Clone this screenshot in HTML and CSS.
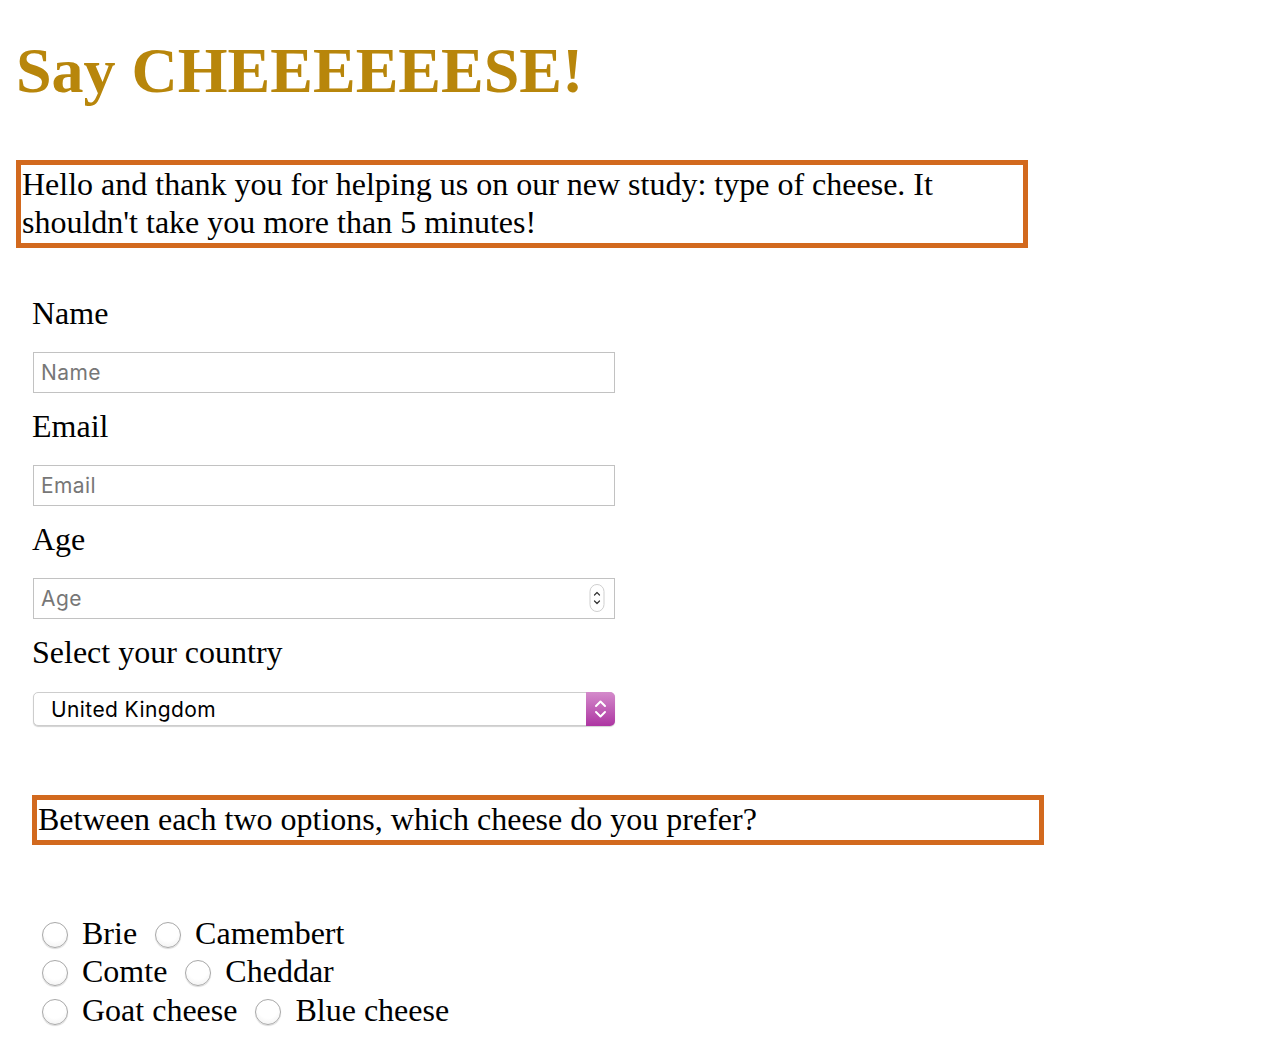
FILE: index.html
```html
<!DOCTYPE html>
<html lang="en">
<head>
<meta charset="utf-8">
<title>Say CHEEEEEESE!</title>
<link rel="stylesheet" href="styles.css">
</head>
<body>
<h1 class="title">Say CHEEEEEESE!</h1>
<p class="intro">Hello and thank you for helping us on our new study: type of cheese. It shouldn't take you more than 5 minutes!</p>
<form class="survey">
  <label class="field-label" for="name">Name</label>
  <input class="field" id="name" type="text" placeholder="Name">
  <label class="field-label" for="email">Email</label>
  <input class="field" id="email" type="text" placeholder="Email">
  <label class="field-label" for="age">Age</label>
  <div class="number-wrap">
    <input class="field" id="age" type="text" placeholder="Age">
    <svg class="spinner" width="16" height="28" viewBox="0 0 16 28" aria-hidden="true">
      <rect x="1" y="0.5" width="14" height="27" rx="7" fill="#fff" stroke="#cfcfcf"/>
      <path d="M5.5 11 L8 8.5 L10.5 11" fill="none" stroke="#333" stroke-width="1.2" stroke-linecap="round" stroke-linejoin="round"/>
      <path d="M5.5 17 L8 19.5 L10.5 17" fill="none" stroke="#333" stroke-width="1.2" stroke-linecap="round" stroke-linejoin="round"/>
    </svg>
  </div>
  <label class="field-label" for="country">Select your country</label>
  <div class="select-wrap">
    <select class="select" id="country">
      <option>United Kingdom</option>
      <option>France</option>
      <option>United States</option>
    </select>
    <span class="select-arrow" aria-hidden="true">
      <svg width="29" height="34" viewBox="0 0 29 34">
        <path d="M10 14 L14.5 9.5 L19 14" fill="none" stroke="#fff" stroke-width="2" stroke-linecap="round" stroke-linejoin="round"/>
        <path d="M10 20 L14.5 24.5 L19 20" fill="none" stroke="#fff" stroke-width="2" stroke-linecap="round" stroke-linejoin="round"/>
      </svg>
    </span>
  </div>
  <p class="question">Between each two options, which cheese do you prefer?</p>
  <div class="choices">
    <div class="row"><input class="radio" type="radio" name="q1" id="brie"> <label for="brie">Brie</label> <input class="radio" type="radio" name="q1" id="camembert"> <label for="camembert">Camembert</label></div>
    <div class="row"><input class="radio" type="radio" name="q2" id="comte"> <label for="comte">Comte</label> <input class="radio" type="radio" name="q2" id="cheddar"> <label for="cheddar">Cheddar</label></div>
    <div class="row"><input class="radio" type="radio" name="q3" id="goat"> <label for="goat">Goat cheese</label> <input class="radio" type="radio" name="q3" id="blue"> <label for="blue">Blue cheese</label></div>
  </div>
</form>
</body>
</html>
```
FILE: styles.css
```css
html, body {
  background: #fff;
}
body {
  margin: 0;
  padding: 8px;
  font-family: "Liberation Serif", "Times New Roman", serif;
  color: #000;
}
.title {
  margin: 26px 0 52px 8px;
  font-size: 64px;
  line-height: 74px;
  font-weight: bold;
  color: #b8860b;
}
.intro {
  box-sizing: border-box;
  width: 1012px;
  margin: 0 0 0 8px;
  padding: 0 1px 2px;
  border: 5px solid #d2691e;
  font-size: 32px;
  line-height: 38px;
}
.survey {
  margin: 46px 0 0 0;
  padding-left: 24px;
}
.field-label {
  display: block;
  margin: 0 0 20px 0;
  font-size: 32px;
  line-height: 38px;
}
.field {
  display: block;
  box-sizing: border-box;
  width: 582px;
  height: 41px;
  margin: 0 0 14px 1px;
  padding: 0 7px;
  border: 1px solid #c2c2c2;
  border-radius: 0;
  font-family: Inter, "Noto Sans", sans-serif;
  font-size: 21px;
  letter-spacing: 0.4px;
  color: #000;
  background: #fff;
  outline: none;
}
.field::placeholder {
  color: #777;
}
.number-wrap {
  position: relative;
  width: 583px;
}
.spinner {
  position: absolute;
  left: 557px;
  top: 6px;
}
.select-wrap {
  position: relative;
  width: 582px;
  height: 34px;
  margin: 21px 0 0 1px;
}
.select {
  appearance: none;
  -webkit-appearance: none;
  box-sizing: border-box;
  width: 582px;
  height: 34px;
  margin: 0;
  padding: 0 40px 0 17px;
  border: 1px solid #cdcdcd;
  border-radius: 5px;
  background: #fff;
  box-shadow: 0 1px 1px rgba(0, 0, 0, 0.18);
  font-family: Inter, "Noto Sans", sans-serif;
  font-size: 21px;
  letter-spacing: 0.4px;
  color: #000;
  outline: none;
}
.select-arrow {
  position: absolute;
  right: 0;
  top: 0;
  width: 29px;
  height: 34px;
  border-radius: 0 5px 5px 0;
  background: linear-gradient(#d48bcb, #ad35a2);
  pointer-events: none;
}
.select-arrow svg {
  display: block;
}
.question {
  box-sizing: border-box;
  width: 1012px;
  margin: 69px 0 0 0;
  padding: 0 1px 2px;
  border: 5px solid #d2691e;
  font-size: 32px;
  line-height: 38px;
}
.choices {
  margin-top: 69px;
  font-size: 32px;
  line-height: 38.4px;
}
.row {
  white-space: nowrap;
}
.radio {
  appearance: none;
  -webkit-appearance: none;
  box-sizing: border-box;
  width: 26px;
  height: 26px;
  margin: 0 6px 0 10px;
  border: 1px solid #a8a8a8;
  border-radius: 50%;
  background: radial-gradient(circle at 50% 35%, #ffffff 50%, #ececec 100%);
  box-shadow: inset 0 1px 1px rgba(255, 255, 255, 0.9), 0 1px 1px rgba(0, 0, 0, 0.15);
  vertical-align: -4px;
}
```
